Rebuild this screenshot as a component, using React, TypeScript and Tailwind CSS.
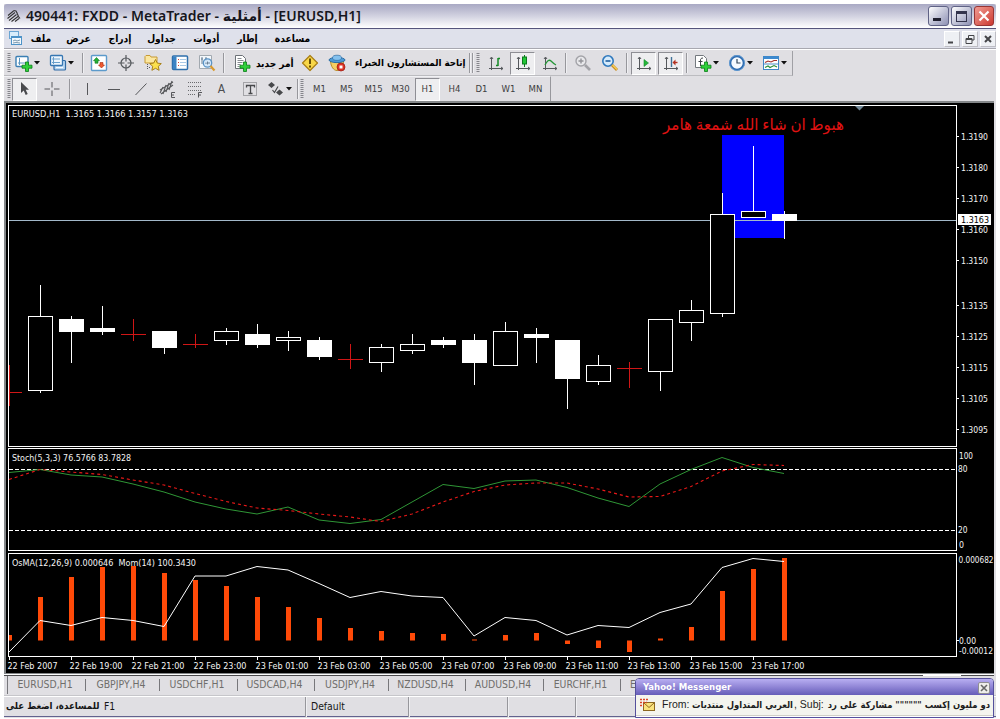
import type { ReactNode } from "react";

const STEP = 31;
const X0 = 9;
const px = (i: number) => X0 + i * STEP;

type Candle = [high: number, top: number, bottom: number, low: number, kind: "up" | "down" | "doji"];

const candles: Candle[] = [
  [365, 392, 392, 406, "doji"],
  [285, 316, 390, 393, "up"],
  [316, 319, 332, 363, "down"],
  [306, 328, 332, 335, "down"],
  [319, 334, 334, 341, "doji"],
  [331, 331, 348, 354, "down"],
  [334, 344, 344, 348, "doji"],
  [328, 331, 340, 345, "up"],
  [324, 334, 345, 348, "down"],
  [331, 337, 340, 351, "up"],
  [337, 340, 357, 360, "down"],
  [344, 359, 359, 369, "doji"],
  [344, 347, 362, 372, "up"],
  [334, 344, 350, 354, "up"],
  [337, 340, 345, 348, "down"],
  [334, 340, 363, 385, "down"],
  [322, 331, 365, 366, "up"],
  [328, 334, 338, 363, "down"],
  [340, 340, 379, 409, "down"],
  [355, 365, 381, 385, "up"],
  [362, 368, 368, 388, "doji"],
  [319, 319, 371, 391, "up"],
  [300, 310, 322, 341, "up"],
  [193, 214, 313, 317, "up"],
  [146, 211, 217, 218, "up"],
  [211, 214, 221, 239, "down"],
];

const stochMain = [
  472.5, 469.5, 475, 477, 484, 492, 502, 509, 514, 507, 520, 523.5, 519.5, 502, 484.5, 488.5, 481, 480, 487.5, 498,
  506.5, 484, 469.5, 457.5, 467.5, 473.5,
];
const stochSignal = [
  479.5, 469.5, 472, 474.5, 480, 485, 493.5, 501.5, 508, 510.5, 514, 517, 521.5, 514, 502, 491.5, 485, 483, 483, 489,
  497, 496.5, 486.5, 471, 464.5, 465.5,
];
const momentum = [
  652, 620.5, 625.5, 617.5, 620.5, 626.5, 576, 576, 566.5, 570, 583.5, 597.5, 591.5, 596, 597.5, 636, 617.5, 620.5,
  635, 625.5, 627.5, 612.5, 604, 567.5, 558.5, 561.5,
];
const osma = [
  635, 597, 577, 567, 566, 573, 580, 586, 597, 607, 618, 628, 631, 633, 634, 639.5, 635, 633, 644, 648, 652, 638.5,
  627, 591, 569, 558,
];

const prices: [string, number][] = [
  ["1.3190", 137],
  ["1.3180", 168],
  ["1.3170", 199],
  ["1.3160", 230],
  ["1.3150", 261],
  ["1.3135", 306],
  ["1.3125", 337],
  ["1.3115", 368],
  ["1.3105", 399],
  ["1.3095", 430],
];

const times = [
  "22 Feb 2007",
  "22 Feb 19:00",
  "22 Feb 21:00",
  "22 Feb 23:00",
  "23 Feb 01:00",
  "23 Feb 03:00",
  "23 Feb 05:00",
  "23 Feb 07:00",
  "23 Feb 09:00",
  "23 Feb 11:00",
  "23 Feb 13:00",
  "23 Feb 15:00",
  "23 Feb 17:00",
];

const toPoints = (ys: number[]) => ys.map((y, i) => `${px(i)},${y}`).join(" ");

function Label({ x, y, w, children, fill = "#f4f4f4" }: { x: number; y: number; w: number; children: string; fill?: string }) {
  return (
    <text x={x} y={y} textLength={w} lengthAdjust="spacingAndGlyphs" fill={fill} xmlSpace="preserve">
      {children}
    </text>
  );
}

function Chart() {
  return (
    <svg
      viewBox="4 101 992 573"
      className="block h-[573px] w-[992px] shrink-0 font-['DejaVu_Sans_Condensed','DejaVu_Sans',sans-serif] text-[9.5px]"
    >
      <rect x="4" y="101" width="992" height="573" fill="#e0dfe3" />
      <rect x="4" y="101" width="990" height="573" fill="#85888a" />
      <rect x="6" y="103" width="988" height="570" fill="#000" />
      <g fill="none" stroke="#fff" shapeRendering="crispEdges">
        <path d="M8.500 105.500H956.500V446.500H8.500Z" />
        <path d="M8.500 448.500H956.500V550.500H8.500Z" />
        <path d="M8.500 553.500H956.500V656.500H8.500Z" />
        {prices.map(([p, y]) => (
          <path key={p} d={`M957 ${y - 0.5}h2`} />
        ))}
        {times.map((t, i) => (
          <path key={t} d={`M${X0 + i * 62 + 0.5} 657v3`} />
        ))}
        <path d="M957 640.500h2" />
        <path d="M9 469.500H956M9 530.500H956" strokeDasharray="3.500 2.500" />
      </g>

      {/* highlighted hammer area */}
      <rect x="722" y="135" width="62" height="103" fill="#0000ff" />
      <path d="M9 220.500H956" stroke="#a3b9ca" />
      <path d="M855 106h9l-4.500 4.500Z" fill="#708797" />

      <g shapeRendering="crispEdges">
        {candles.map(([high, top, bottom, low, kind], i) => {
          const x = px(i);
          if (kind === "doji") {
            const left = i === 0 ? x : x - 12;
            return (
              <path key={i} d={`M${x + 0.5} ${high}V${low}M${left} ${top + 0.5}H${x + 13}`} stroke="#d01616" />
            );
          }
          return (
            <g key={i} stroke="#fff">
              <path d={`M${x + 0.5} ${high}V${low}`} />
              {kind === "up" ? (
                <rect x={x - 11.5} y={top + 0.5} width="24" height={bottom - top} fill="#000" />
              ) : (
                <rect x={x - 12} y={top} width="25" height={bottom - top} fill="#fff" stroke="none" />
              )}
            </g>
          );
        })}
      </g>

      <polyline points={toPoints(stochMain)} fill="none" stroke="#2f9636" />
      <polyline points={toPoints(stochSignal)} fill="none" stroke="#e81818" strokeWidth="1.100" strokeDasharray="3 3" />

      {osma.map((y, i) => {
        const left = i === 0 ? X0 : px(i) - 2;
        return (
          <rect
            key={i}
            x={left}
            y={Math.min(y, 640.5)}
            width={i === 0 ? 3 : 5}
            height={Math.abs(640.5 - y)}
            fill="#ff4a08"
          />
        );
      })}
      <polyline points={toPoints(momentum)} fill="none" stroke="#fff" />

      <Label x={12} y={116.5} w={176}>EURUSD,H1  1.3165 1.3166 1.3157 1.3163</Label>
      <Label x={12} y={461} w={119}>Stoch(5,3,3) 76.5766 83.7828</Label>
      <Label x={12} y={566} w={184}>OsMA(12,26,9) 0.000646  Mom(14) 100.3430</Label>
      {prices.map(([p, y]) => (
        <Label key={p} x={961} y={y + 3} w={27}>
          {p}
        </Label>
      ))}
      <rect x="958" y="214" width="33" height="11" fill="#fff" />
      <Label x={961} y={223} w={28} fill="#000">1.3163</Label>
      <Label x={959} y={458.5} w={14}>100</Label>
      <Label x={958} y={472} w={9.5}>80</Label>
      <Label x={958} y={533} w={9.5}>20</Label>
      <Label x={959} y={548} w={5}>0</Label>
      <Label x={958.5} y={563} w={35}>0.000682</Label>
      <Label x={959} y={644} w={17}>0.00</Label>
      <Label x={959} y={653.5} w={34}>-0.00012</Label>
      {times.map((t, i) => (
        <Label key={t} x={7.5 + i * 62} y={669} w={i === 0 ? 50 : 53}>
          {t}
        </Label>
      ))}
      <text
        x="663"
        y="130"
        textLength="181"
        lengthAdjust="spacingAndGlyphs"
        fill="#e01212"
        className="font-['Liberation_Serif','DejaVu_Sans',serif] text-[16px]"
      >
        هبوط ان شاء الله شمعة هامر
      </text>
    </svg>
  );
}

/* ---------- toolbar parts ---------- */

function Icon({ children }: { children: ReactNode }) {
  return (
    <svg viewBox="0 0 18 18" fill="none" className="h-[18px] w-[18px] shrink-0">
      {children}
    </svg>
  );
}

function Cell({ children, pressed }: { children: ReactNode; pressed?: boolean }) {
  return (
    <div className="flex h-[23px] w-[27px] shrink-0 items-center justify-center">
      {pressed ? (
        <div className="flex h-[23px] w-[25px] items-center justify-center border border-t-[#8e8e94] border-r-white border-b-white border-l-[#8e8e94] bg-[#eeeef0]">
          {children}
        </div>
      ) : (
        children
      )}
    </div>
  );
}

function DropCell({ children }: { children: ReactNode }) {
  return (
    <div className="flex h-[23px] w-[34px] shrink-0 items-center pl-[4px]">
      {children}
      <svg viewBox="0 0 6 4" className="ml-[1px] h-[4px] w-[6px]">
        <path d="M0 0h6L3 3.500Z" fill="#111" />
      </svg>
    </div>
  );
}

function Sep() {
  return <div className="h-[20px] w-[2px] shrink-0 border-l border-[#97979c] bg-[#efeff2]" />;
}

function Grip() {
  return (
    <svg viewBox="0 0 4 20" className="h-[20px] w-[4px] shrink-0">
      <path d="M2 0V20" stroke="#85858b" strokeWidth="3" strokeDasharray="1 1" />
    </svg>
  );
}

const Plus = () => <path d="M10.500 8h3v3.200h3.500v3h-3.500V17.500h-3v-3.300H7v-3h3.500Z" fill="#2fd03a" stroke="#087c16" strokeWidth=".8" />;

const axes = <path d="M4.500 3.500V16M2 14.500H16M3 5l1.500-2L6 5M14 13l2 1.500-2 1.500" stroke="#55585c" />;

const NewChartIcon = () => (
  <Icon>
    <rect x="1" y="2.500" width="12" height="10" rx="1" fill="#fff" stroke="#3b7fb4" strokeWidth="1.400" />
    <path d="M4.500 4v7M3 9h8" stroke="#5a95c0" />
    <Plus />
  </Icon>
);

const ProfilesIcon = () => (
  <Icon>
    <rect x="5" y="6.500" width="11.500" height="9.500" rx="1" fill="#b9d7f2" stroke="#2f6ba6" strokeWidth="1.200" />
    <rect x="1.500" y="1.500" width="12" height="10" rx="1" fill="#eef6fd" stroke="#3576b2" strokeWidth="1.300" />
    <path d="M4.500 3v7M3 8.500h8M3 5h8" stroke="#6aa0cc" />
    <path d="M7 13.500h7" stroke="#f6fbff" />
  </Icon>
);

const MarketIcon = () => (
  <Icon>
    <rect x="1.500" y="1.500" width="15" height="15" rx="1" fill="#fff" stroke="#5c9acb" strokeWidth="1.400" />
    <path d="M6.500 3.500 9.500 6.700H8v2.500H5V6.700H3.500Z" fill="#22b035" stroke="#13751f" strokeWidth=".6" />
    <path d="M11.500 14 8.500 11h1.500V8.500h3V11h1.500Z" fill="#ef5a30" stroke="#a32d10" strokeWidth=".6" />
  </Icon>
);

const CrosshairIcon = () => (
  <Icon>
    <circle cx="9" cy="9" r="5" stroke="#54585c" strokeWidth="1.200" />
    <path d="M9 1v6.500M9 10.500V17M1 9h6.500M10.500 9H17" stroke="#54585c" strokeWidth="1.200" />
  </Icon>
);

const FavoritesIcon = () => (
  <Icon>
    <path d="M1 2.500 2 1.500h4l1 1.500h6V9H1Z" fill="#fbe7a0" stroke="#c79a35" />
    <path d="M3.500 10v5M5 13.500h2" stroke="#55585c" strokeDasharray="1 1" />
    <path d="m11.500 5.500 1.800 3.600 4 .5-3 2.700.8 4-3.600-2-3.600 2 .8-4-3-2.700 4-.5Z" fill="#fbe04c" stroke="#a8801a" />
  </Icon>
);

const NavigatorIcon = () => (
  <Icon>
    <rect x="1.500" y="2" width="15" height="13.500" rx="1" fill="#fff" stroke="#2f70ad" strokeWidth="1.500" />
    <rect x="2" y="2.500" width="3.500" height="12.500" fill="#3b83c4" />
    <path d="M7 5.500h1M7 8.500h1M7 11.500h1" stroke="#d0453a" />
    <path d="M9 5.500h6M9 8.500h6M9 11.500h6" stroke="#a9c9e6" />
  </Icon>
);

const TesterIcon = () => (
  <Icon>
    <path d="M1.500 1.500h12v13h-12Z" fill="#f3f7fb" stroke="#a2a9b0" />
    <path d="M4 3v7M3 5h2M8 3v4M7 5h2" stroke="#6a8095" />
    <circle cx="9.500" cy="9" r="4.200" fill="#cfe6fa" fillOpacity=".85" stroke="#5a93c5" strokeWidth="1.300" />
    <path d="M8 10V8.500M9.500 10.500v-3M11 10V8" stroke="#6a8095" />
    <path d="m12.500 12 4 4.500" stroke="#d99a2e" strokeWidth="2.200" />
  </Icon>
);

const NewOrderIcon = () => (
  <Icon>
    <path d="M2.500 1.500h7l3 3v10h-10Z" fill="#fff" stroke="#6c7177" />
    <path d="M4.500 4.500h4M4.500 6.500h6M4.500 8.500h5M4.500 10.500h3M4.500 12.500h2" stroke="#868b91" />
    <Plus />
  </Icon>
);

const MetaEditorIcon = () => (
  <Icon>
    <path d="M9 1.500 16.500 9 9 16.500 1.500 9Z" fill="#f8d748" stroke="#a97e14" strokeWidth="1.200" strokeLinejoin="round" />
    <path d="M9 4.500V10M9 11.500v2" stroke="#594200" strokeWidth="1.800" />
  </Icon>
);

const ExpertIcon = () => (
  <Icon>
    <path d="M2.500 7.500c.5 5 3 9 6.500 9s6-4 6.500-9Z" fill="#f5cf62" stroke="#b78c28" />
    <ellipse cx="9" cy="6" rx="8" ry="2.600" fill="#4c9ad6" stroke="#2b6ca3" />
    <ellipse cx="9" cy="3.800" rx="4.500" ry="2.600" fill="#84c1ee" stroke="#2b6ca3" strokeWidth=".7" />
    <circle cx="13" cy="13" r="4" fill="#dc3324" stroke="#991a10" strokeWidth=".7" />
    <rect x="11.500" y="11.500" width="3" height="3" fill="#fff" />
  </Icon>
);

const BarsIcon = () => (
  <Icon>
    {axes}
    <path d="M11 4v8M9 11.500h2M11 4.500h2" stroke="#158a27" strokeWidth="1.500" />
  </Icon>
);

const CandlesIcon = () => (
  <Icon>
    {axes}
    <path d="M10.500 1v12" stroke="#0b7a1d" />
    <rect x="8.500" y="3" width="4" height="7" fill="#21c636" stroke="#0b7a1d" />
  </Icon>
);

const LineIcon = () => (
  <Icon>
    {axes}
    <path d="M4 11c2-4 4-6 6-4s3 3 5 4" stroke="#259638" strokeWidth="1.300" />
  </Icon>
);

const ZoomInIcon = () => (
  <Icon>
    <circle cx="7" cy="7" r="5" fill="#e8e8eb" stroke="#a3a3a8" strokeWidth="1.400" />
    <path d="M4.500 7h5M7 4.500v5" stroke="#929298" strokeWidth="1.400" />
    <path d="m11 11 5 5" stroke="#a3a3a8" strokeWidth="2.600" />
  </Icon>
);

const ZoomOutIcon = () => (
  <Icon>
    <circle cx="7" cy="7" r="5.200" fill="#d6ebfc" stroke="#2f79bd" strokeWidth="1.600" />
    <path d="M4.500 7h5" stroke="#205f9d" strokeWidth="1.600" />
    <path d="m11 11 5 5" stroke="#c88b1f" strokeWidth="2.800" />
    <path d="m11.500 11 4.500 4.500" stroke="#f7d35b" strokeWidth="1.200" />
  </Icon>
);

const AutoScrollIcon = () => (
  <Icon>
    {axes}
    <path d="M9 5.500v7l4.500-3.500Z" fill="#23b839" stroke="#14862a" strokeWidth=".6" />
  </Icon>
);

const ShiftIcon = () => (
  <Icon>
    {axes}
    <path d="M9.500 3v10" stroke="#3f7197" strokeWidth="1.400" />
    <path d="M15.500 8.500H12" stroke="#b43120" strokeWidth="1.400" />
    <path d="M13.500 5.500v6l-3-3Z" fill="#b43120" />
  </Icon>
);

const IndicatorsIcon = () => (
  <Icon>
    <path d="M1.500 1.500h8l3 3v9h-11Z" fill="#fff" stroke="#74797f" />
    <path d="M9 4c-2 0-2.500 1-2.500 2V12M4.500 7.500h4" stroke="#3d4247" />
    <Plus />
  </Icon>
);

const ClockIcon = () => (
  <Icon>
    <circle cx="9" cy="9" r="6.800" fill="#f5faff" stroke="#2c69ae" strokeWidth="2.200" />
    <circle cx="9" cy="9" r="7.500" stroke="#6aa6dc" strokeWidth=".7" />
    <path d="M9 5v4h3.500" stroke="#33475b" strokeWidth="1.200" />
  </Icon>
);

const TemplatesIcon = () => (
  <Icon>
    <rect x="1.500" y="2.500" width="15" height="13" fill="#fff" stroke="#3e86c4" />
    <rect x="1.500" y="2.500" width="15" height="2.500" fill="#3d8ad0" />
    <path d="M2 10h14" stroke="#4c8ec5" />
    <path d="m3 8.500 3-1.500 3 1 3-1.500h3" stroke="#a32d26" strokeWidth="1.100" />
    <path d="m3 13.500 3-1.500 2 1.500 4-2 3 1.500" stroke="#278f37" strokeWidth="1.100" />
  </Icon>
);

const CursorIcon = () => (
  <Icon>
    <path d="M5 2v11l2.700-2.500 2 4.500 2-.9-2-4.300H13Z" fill="#494a4d" />
  </Icon>
);

function StandardToolbar() {
  return (
    <div className="flex h-[25px] w-[789px] shrink-0 items-center border-r border-b border-r-[#a0a0a5] border-b-[#bcbcc0] pl-[3px]">
      <Grip />
      <div className="flex items-center">
        <DropCell><NewChartIcon /></DropCell>
        <DropCell><ProfilesIcon /></DropCell>
      </div>
      <div className="ml-[3px] mr-[1px]"><Sep /></div>
      <Cell><MarketIcon /></Cell>
      <Cell><CrosshairIcon /></Cell>
      <Cell><FavoritesIcon /></Cell>
      <Cell><NavigatorIcon /></Cell>
      <Cell><TesterIcon /></Cell>
      <div className="ml-[3px] mr-[3px]"><Sep /></div>
      <Cell><NewOrderIcon /></Cell>
      <span dir="rtl" className="w-[41px] text-center text-[10px] font-bold whitespace-nowrap">أمر جديد</span>
      <div className="ml-[2px]"><Cell><MetaEditorIcon /></Cell></div>
      <Cell><ExpertIcon /></Cell>
      <span dir="rtl" className="ml-[1px] flex w-[122px] justify-center text-[9.7px] font-bold whitespace-nowrap">
        إتاحة المستشارون الخبراء
      </span>
      <div className="mr-[2px] flex gap-px">
        <Sep />
        <Sep />
      </div>
      <Grip />
      <div className="flex pl-[2px]">
        <Cell><BarsIcon /></Cell>
        <Cell pressed><CandlesIcon /></Cell>
        <Cell><LineIcon /></Cell>
      </div>
      <div className="mr-[2px] ml-[2px]"><Sep /></div>
      <Cell><ZoomInIcon /></Cell>
      <Cell><ZoomOutIcon /></Cell>
      <div className="mr-[2px] ml-[3px]"><Sep /></div>
      <Cell pressed><AutoScrollIcon /></Cell>
      <Cell pressed><ShiftIcon /></Cell>
      <div className="mr-[2px] ml-[2px]"><Sep /></div>
      <DropCell><IndicatorsIcon /></DropCell>
      <DropCell><ClockIcon /></DropCell>
      <DropCell><TemplatesIcon /></DropCell>
    </div>
  );
}

const periods = ["M1", "M5", "M15", "M30", "H1", "H4", "D1", "W1", "MN"];

function LineToolbar() {
  return (
    <div className="flex h-[25px] w-[547px] shrink-0 items-center border-t border-r border-t-[#f1f1f4] border-r-[#97979c] pl-[3px]">
      <Grip />
      <Cell pressed><CursorIcon /></Cell>
      <Cell>
        <Icon><path d="M9 2v5.500M9 10.500V16M1.500 9H7M11 9h5.500" stroke="#56575a" /></Icon>
      </Cell>
      <div className="mr-[2px] ml-[4px]"><Sep /></div>
      <Cell>
        <Icon><path d="M9.500 3v12" stroke="#56575a" /></Icon>
      </Cell>
      <Cell>
        <Icon><path d="M3 9.500h12" stroke="#56575a" /></Icon>
      </Cell>
      <Cell>
        <Icon><path d="m3.500 15 11-11.500" stroke="#56575a" /></Icon>
      </Cell>
      <Cell>
        <Icon>
          <path d="m1 10 13-8M2 14 14 5M4 14l3-9M7 12l3-9M10 10l3-9M1 13l3-6" stroke="#56575a" strokeWidth="1.100" />
          <path d="M16 12.500h-3.500v5H16M12.500 15H15" stroke="#56575a" />
        </Icon>
      </Cell>
      <Cell>
        <Icon>
          <path d="M2 2.500h13M2 6.500h13M2 10.500h13M2 14.500h8" stroke="#6a6b6e" strokeDasharray="1 1" />
          <path d="M12.500 17.500v-5H16M12.500 15H15" stroke="#56575a" />
        </Icon>
      </Cell>
      <Cell><span className="text-[12px] text-[#4d4e51]">A</span></Cell>
      <div className="ml-px">
        <Cell>
          <Icon>
            <rect x="2.500" y="2.500" width="13" height="13" stroke="#66676a" strokeDasharray="1 1" />
            <path d="M5.500 7.500v-2h8v2M9.500 5.500v8M7.500 13.500h4" stroke="#47484b" strokeWidth="1.300" />
          </Icon>
        </Cell>
      </div>
      <DropCell>
        <Icon>
          <path d="m1 5 3.500-3L8 5 4.500 8ZM9 12.500l3.500-3 3.500 3-3.500 3Z" fill="#47484b" />
          <path d="m5.500 10 2 2.500L11 6.500" stroke="#47484b" strokeWidth="1.200" />
        </Icon>
      </DropCell>
      <div className="mr-[1px]"><Sep /></div>
      <Grip />
      <div className="flex pl-[2px] text-[9.5px] text-[#3d3e41]">
        {periods.map((p) => (
          <Cell key={p} pressed={p === "H1"}>{p}</Cell>
        ))}
      </div>
    </div>
  );
}

function TitleBar() {
  return (
    <div className="flex h-[25px] shrink-0 items-center rounded-t-[3px] border-b border-[#55557c] bg-linear-to-b from-[#a9a9c4] via-[#c9c9da] via-40% to-white pr-[2px] pl-[3px]">
      <svg viewBox="0 0 14 14" className="h-[14px] w-[14px]" fill="none" stroke="#333" strokeWidth="1.100">
        <path d="M1 6.500 6.500 2M.5 9.500 8 3.500M2 11.500l7.500-6M4.500 12.500 11 7.500M8 12.500l4-3M6.500 1.500 9 2l1.500 3M10 4l1.500 3.500L13 9.500" />
      </svg>
      <span className="ml-[5px] text-[14px] leading-none font-semibold tracking-[0.05px] whitespace-pre text-[#161620] font-['Noto_Sans','DejaVu_Sans',sans-serif]">
        490441: FXDD - MetaTrader - أمثلية - [EURUSD,H1]
      </span>
      <div className="ml-auto flex gap-[2px]">
        <div className="flex h-[20px] w-[21px] items-end rounded-[3px] border border-[#5f6285] bg-linear-to-br from-white to-[#8d90b3] pb-[4px] pl-[4px]">
          <div className="h-[3px] w-[8px] bg-[#20202f]" />
        </div>
        <div className="flex h-[20px] w-[21px] items-center justify-center rounded-[3px] border border-[#5f6285] bg-linear-to-br from-white to-[#8d90b3]">
          <div className="h-[11px] w-[11px] border border-t-[3px] border-[#33344c]" />
        </div>
        <div className="flex h-[20px] w-[20px] items-center justify-center rounded-[3px] border border-[#983534] bg-linear-to-br from-[#f09a92] to-[#cb3530]">
          <svg viewBox="0 0 12 12" className="h-[12px] w-[12px]">
            <path d="m1.500 1.500 9 9m0-9-9 9" stroke="#fff" strokeWidth="2.200" />
          </svg>
        </div>
      </div>
    </div>
  );
}

const menus: [string, string][] = [
  ["ملف", "w-[32px]"],
  ["عرض", "w-[43px]"],
  ["إدراج", "w-[40px]"],
  ["جداول", "w-[43px]"],
  ["أدوات", "w-[47px]"],
  ["إطار", "w-[35px]"],
  ["مساعدة", "w-[55px]"],
];

function MenuBar() {
  return (
    <div className="flex h-[20px] shrink-0 items-center border-b border-[#a8a8b0] bg-[#dfe1eb] pl-[4px]">
      <svg viewBox="0 0 15 15" className="h-[15px] w-[15px]" fill="none">
        <rect x="1.500" y=".5" width="9" height="7" fill="#d8edfb" stroke="#6aa5d3" />
        <rect x="3.500" y="5.500" width="10" height="8" fill="#f2f9fe" stroke="#4d93c8" />
        <path d="M4 6.500h9" stroke="#4d93c8" />
        <path d="m5 10 2-1 2 1 3-1M5 12l3-.5 4 .5" stroke="#7a98ae" />
      </svg>
      <div className="ml-[2px] flex">
        {menus.map(([name, width]) => (
          <span key={name} className={`${width} flex justify-center text-[10.2px] font-bold whitespace-nowrap`}>
            {name}
          </span>
        ))}
      </div>
      <div className="ml-auto flex gap-[2px]">
        {["M3 10.500h5", "M5.500 6V3.500H11V8H9M3 6.500h6v5H3ZM3 7.500h6", "m4 4 6 6m0-6-6 6"].map((d, i) => (
          <div key={d} className="h-[16px] w-[16px] border border-white border-r-[#bdbdc4] border-b-[#bdbdc4] bg-[#eef0f4]">
            <svg viewBox="0 0 14 14" className="h-[14px] w-[14px]" fill="none">
              <path d={d} stroke="#444548" strokeWidth={i === 1 ? 1 : 2} />
            </svg>
          </div>
        ))}
      </div>
    </div>
  );
}

const tabs: [string, string][] = [
  ["EURUSD,H1", "w-[78px]"],
  ["GBPJPY,H4", "w-[74px]"],
  ["USDCHF,H1", "w-[78px]"],
  ["USDCAD,H4", "w-[77px]"],
  ["USDJPY,H4", "w-[74px]"],
  ["NZDUSD,H4", "w-[77px]"],
  ["AUDUSD,H4", "w-[78px]"],
  ["EURCHF,H1", "w-[77px]"],
];

function ChartTabs() {
  return (
    <div className="flex h-[22px] shrink-0 flex-col border-b border-[#c6c6ca]">
      <div className="flex h-[2px] w-[990px] shrink-0 justify-between bg-white">
        <div className="h-[2px] w-[919px] border-b border-[#4b4b4e]" />
        <div className="h-[2px] w-[33px] border-b border-[#4b4b4e]" />
      </div>
      <div className="flex flex-1 items-center pb-px pl-[3px] text-[10.4px] text-[#6f6e6b]">
        <div className="h-full w-px bg-[#77777b]" />
        {tabs.map(([name, width]) => (
          <div key={name} className={`${width} flex h-[12px] shrink-0 items-center justify-center border-r border-[#77777b] pr-[3px]`}>
            {name}
          </div>
        ))}
        <span className="pl-[9px]">E</span>
      </div>
    </div>
  );
}

function StatusBar() {
  return (
    <div className="flex h-[21px] shrink-0 items-center border-t border-b border-t-white border-b-[#62628e] text-[10.3px] text-[#151515]">
      <div className="flex w-[301px] items-center pl-[2px] whitespace-nowrap">
        <span dir="rtl" className="flex w-[98px] justify-end text-[9.6px] font-bold">للمساعدة، اضغط على</span>
        <span>F1</span>
      </div>
      <Sep />
      <span className="w-[101px] pl-[4px]">Default</span>
      <Sep />
      <div className="w-[97px]" />
      <Sep />
      <div className="w-[66px]" />
      <Sep />
    </div>
  );
}

function MessengerPopup() {
  return (
    <div className="absolute top-[678px] left-[635px] flex h-[40px] w-[359px] flex-col overflow-hidden rounded-t-[4px] border border-[#55509c] bg-[#f4f4ee]">
      <div className="flex h-[16px] shrink-0 items-center justify-between bg-linear-to-b from-[#b8aef2] via-[#9085d6] to-[#665db8] pt-px pr-[3px] pl-[7px]">
        <span className="text-[9.5px] font-bold text-white">Yahoo! Messenger</span>
        <div className="flex h-[12px] w-[12px] items-center justify-center rounded-[2px] border border-[#8f8f92] bg-[#eeeeea]">
          <svg viewBox="0 0 8 8" className="h-[8px] w-[8px]">
            <path d="m1 1 6 6m0-6-6 6" stroke="#666" strokeWidth="1.600" />
          </svg>
        </div>
      </div>
      <div className="flex h-[20px] shrink-0 items-center pl-[3px] text-[10.5px] whitespace-nowrap text-[#1d1d1d] font-['Liberation_Sans','DejaVu_Sans',sans-serif]">
        <svg viewBox="0 0 17 14" className="h-[14px] w-[17px] shrink-0" fill="none">
          <rect x="4.500" y="4.500" width="11" height="8" fill="#fae37c" stroke="#8d6821" />
          <path d="m5 5 5 4.500L15 5" stroke="#8d6821" />
          <path d="M1 1.500h8M1 4.500h7M1 7.500h4" stroke="#db4326" strokeWidth="1.500" strokeDasharray="2 1" />
        </svg>
        <span className="ml-[6px] w-[29px]">From:</span>
        <span dir="rtl" className="flex w-[103px] justify-center text-[9.4px] font-bold font-['DejaVu_Sans_Condensed','DejaVu_Sans',sans-serif]">
          العربي المتداول منتديات
        </span>
        <span className="w-[31px]">, Subj:</span>
        <span dir="rtl" className="flex w-[165px] justify-start text-[9.4px] font-bold font-['DejaVu_Sans_Condensed','DejaVu_Sans',sans-serif]">
          دو مليون إكسب """""" مشاركة على رد
        </span>
      </div>
      <div className="flex-1 border-t border-[#cfcfc8] bg-white" />
    </div>
  );
}

export default function App() {
  return (
    <div className="relative h-[719px] w-[1000px] overflow-hidden bg-white pt-[4px] pl-[4px] font-['DejaVu_Sans_Condensed','DejaVu_Sans',sans-serif] text-black">
      <div className="flex h-[714px] w-[992px] flex-col bg-[#e0dfe3]">
        <TitleBar />
        <MenuBar />
        <div className="flex h-[52px] shrink-0 flex-col border-t border-white pt-px">
          <StandardToolbar />
          <LineToolbar />
        </div>
        <Chart />
        <ChartTabs />
        <StatusBar />
      </div>
      <MessengerPopup />
    </div>
  );
}
